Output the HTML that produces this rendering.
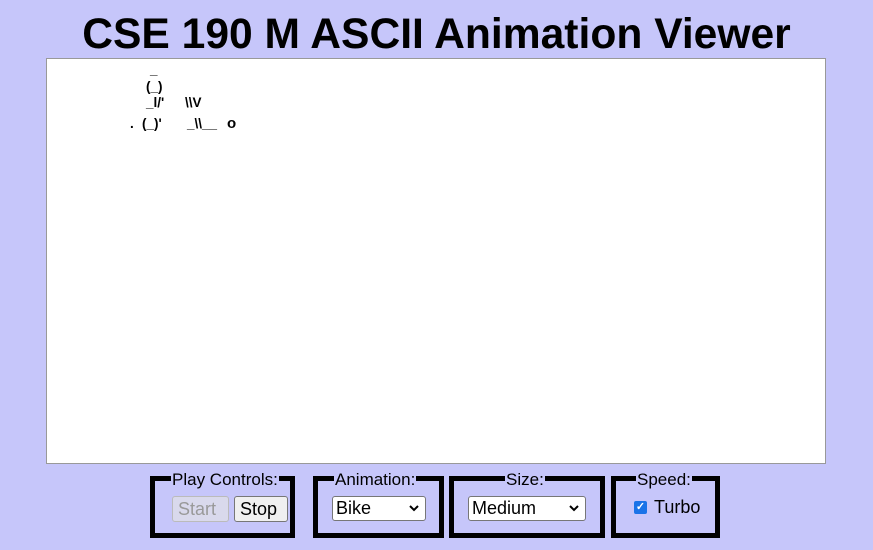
<!DOCTYPE html>
<html><head><style>
body{margin:0;width:873px;height:550px;background:#c6c6fa;font-family:"Liberation Sans",Arial,sans-serif;position:relative;overflow:hidden}
h1{position:absolute;left:0;width:873px;top:10px;margin:0;text-align:center;font-size:42.6px;line-height:48px;font-weight:bold;color:#000}
.ta{position:absolute;left:46px;top:58px;width:778px;height:404px;background:#fff;border:1px solid #999}
.a{position:absolute;font-weight:bold;font-size:13.5px;white-space:pre;line-height:15px}
.fs{position:absolute;top:476px;height:52px;border:5px solid #000;box-sizing:content-box}
.lg{position:absolute;top:-11px;font-size:17px;line-height:19px;background:#c6c6fa;padding:0 1px;white-space:nowrap}
.btn{position:absolute;top:15px;height:26px;font-size:18px;line-height:24px;border:1px solid #777;border-radius:3px;box-sizing:border-box;padding:0 5px}
.sel{position:absolute;top:15px;height:25px;background:#fff;border:1px solid #777;border-radius:3px;box-sizing:border-box;font-size:18px;line-height:23px;padding-left:3px}
.sel svg{position:absolute;right:6px;top:8px}
</style></head><body>
<h1>CSE 190 M ASCII Animation Viewer</h1>
<div class="ta">
<div class="a" style="left:103px;top:3px">_</div>
<div class="a" style="left:99px;top:20px">(_)</div>
<div class="a" style="left:99px;top:36px">_l/'</div>
<div class="a" style="left:138px;top:36px">\\V</div>
<div class="a" style="left:83px;top:57px">.</div>
<div class="a" style="left:95px;top:57px">(_)'</div>
<div class="a" style="left:140px;top:57px">_\\__</div>
<div class="a" style="left:180px;top:57px;font-size:15px">o</div>
</div>
<div class="fs" style="left:150px;width:135px">
<div class="lg" style="left:16px">Play Controls:</div>
<div class="btn" style="left:17px;width:57px;color:#999;background:#d9d9ec;border-color:#bbb">Start</div>
<div class="btn" style="left:79px;width:54px;background:#f0f0f0">Stop</div>
</div>
<div class="fs" style="left:313px;width:121px">
<div class="lg" style="left:16px">Animation:</div>
<div class="sel" style="left:14px;width:94px">Bike<svg width="10" height="7" viewBox="0 0 10 7"><path d="M1 1L5 5L9 1" stroke="#000" stroke-width="2" fill="none"/></svg></div>
</div>
<div class="fs" style="left:449px;width:146px">
<div class="lg" style="left:51px">Size:</div>
<div class="sel" style="left:14px;width:118px">Medium<svg width="10" height="7" viewBox="0 0 10 7"><path d="M1 1L5 5L9 1" stroke="#000" stroke-width="2" fill="none"/></svg></div>
</div>
<div class="fs" style="left:611px;width:99px">
<div class="lg" style="left:20px">Speed:</div>
<div style="position:absolute;left:18px;top:20px;width:13px;height:13px;background:#1a73e8;border-radius:2px;color:#fff;font-size:11px;line-height:13px;text-align:center;font-weight:bold">&#10003;</div>
<div style="position:absolute;left:38px;top:16px;font-size:18px">Turbo</div>
</div>
</body></html>
